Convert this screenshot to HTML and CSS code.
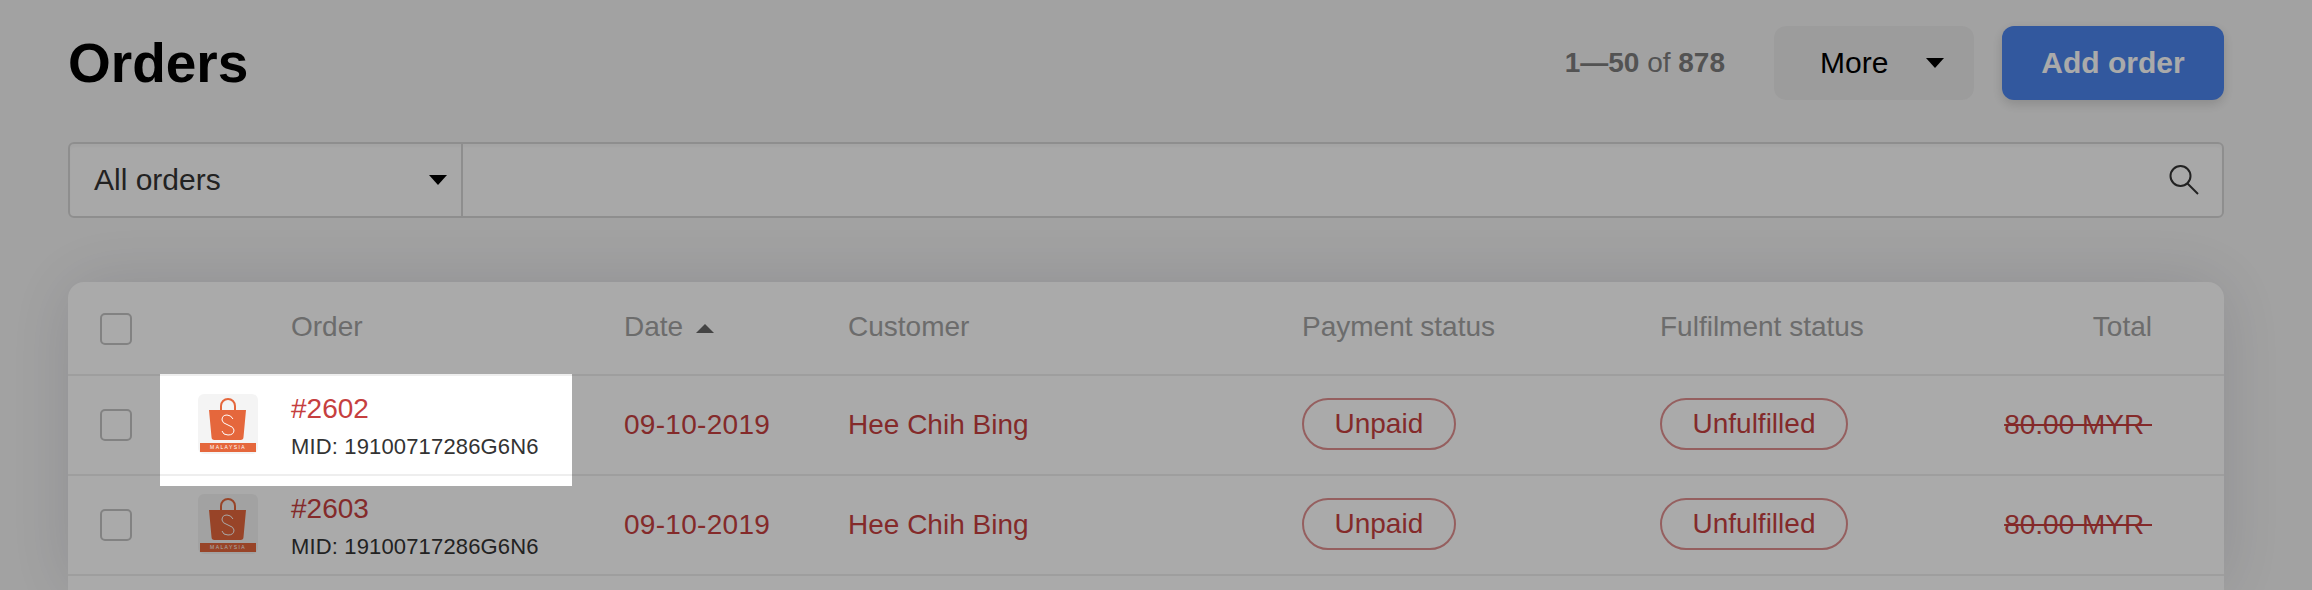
FILE: index.html
```html
<!DOCTYPE html>
<html lang="en">
<head>
<meta charset="UTF-8">
<meta name="viewport" content="width=device-width, initial-scale=1.0">
<title>Orders</title>
<link rel="stylesheet" href="styles.css">
</head>
<body>
<div class="page">
  <div class="topbar">
    <h1 class="title">Orders</h1>
    <div class="range"><b>1—50</b> of <b>878</b></div>
    <button class="btn btn-more">More <span class="caret"></span></button>
    <button class="btn btn-add">Add order</button>
  </div>

  <div class="filter">
    <div class="filter-select">All orders <span class="caret"></span></div>
    <div class="filter-search">
      <svg width="30" height="30" viewBox="0 0 30 30" fill="none" stroke="#333" stroke-width="2">
        <circle cx="11.5" cy="11" r="10"/>
        <path d="M18.5 18.5L29 29"/>
      </svg>
    </div>
  </div>

  <div class="card">
    <div class="row row-head">
      <span class="check"></span>
      <span></span>
      <span>Order</span>
      <span>Date <span class="caret-up"></span></span>
      <span>Customer</span>
      <span>Payment status</span>
      <span>Fulfilment status</span>
      <span class="right">Total</span>
    </div>

    <div class="row">
      <span class="check"></span>
      <svg class="thumb" width="60" height="60" viewBox="0 0 60 60">
        <rect width="60" height="60" rx="6" fill="#f4f4f4"/>
        <path d="M23 17v-5a7 7 0 0 1 14 0v5" fill="none" stroke="#e5673c" stroke-width="2"/>
        <path d="M11 16h37l-2.5 27q0 3-3 3H16.500q-3 0-3-3z" fill="#e5673c"/>
        <path d="M35 25q-2-4-6-4-5 0-5 5 0 3 6 5t6 5q0 5-6 5-5 0-6-4" fill="none" stroke="#fff" stroke-width="1"/>
        <rect x="2" y="49" width="56" height="9" fill="#e5673c"/>
        <text x="30" y="55.4" class="thumb-text">MALAYSIA</text>
      </svg>
      <div class="order-cell">
        <div class="order-no">#2602</div>
        <div class="order-mid">MID: 19100717286G6N6</div>
      </div>
      <span class="red date">09-10-2019</span>
      <span class="red">Hee Chih Bing</span>
      <span class="pill-cell"><span class="pill">Unpaid</span></span>
      <span class="pill-cell"><span class="pill">Unfulfilled</span></span>
      <span class="red right total">80.00 MYR&nbsp;</span>
    </div>

    <div class="row">
      <span class="check"></span>
      <svg class="thumb" width="60" height="60" viewBox="0 0 60 60">
        <rect width="60" height="60" rx="6" fill="#f4f4f4"/>
        <path d="M23 17v-5a7 7 0 0 1 14 0v5" fill="none" stroke="#e5673c" stroke-width="2"/>
        <path d="M11 16h37l-2.5 27q0 3-3 3H16.500q-3 0-3-3z" fill="#e5673c"/>
        <path d="M35 25q-2-4-6-4-5 0-5 5 0 3 6 5t6 5q0 5-6 5-5 0-6-4" fill="none" stroke="#fff" stroke-width="1"/>
        <rect x="2" y="49" width="56" height="9" fill="#e5673c"/>
        <text x="30" y="55.4" class="thumb-text">MALAYSIA</text>
      </svg>
      <div class="order-cell">
        <div class="order-no">#2603</div>
        <div class="order-mid">MID: 19100717286G6N6</div>
      </div>
      <span class="red date">09-10-2019</span>
      <span class="red">Hee Chih Bing</span>
      <span class="pill-cell"><span class="pill">Unpaid</span></span>
      <span class="pill-cell"><span class="pill">Unfulfilled</span></span>
      <span class="red right total">80.00 MYR&nbsp;</span>
    </div>

    <div class="spotlight"></div>
  </div>
</div>
</body>
</html>
```

FILE: styles.css
```css
html, body {
  height: 590px;
  margin: 0;
  overflow: hidden;
}
body {
  font-family: "Liberation Sans", Arial, sans-serif;
  background-color: #f4f4f4;
  color: #333;
}
.page {
  padding: 26px 88px 0 68px;
}
.topbar {
  display: flex;
  align-items: center;
  height: 74px;
  margin-bottom: 42px;
}
.title {
  flex: 1;
  margin: 0;
  font-size: 55px;
  font-weight: bold;
  color: #000;
}
.range {
  margin-right: 49px;
  font-size: 28px;
  color: #7d7d7d;
}
.btn {
  height: 74px;
  border: none;
  border-radius: 12px;
  font-family: inherit;
  font-size: 30px;
}
.btn-more {
  display: flex;
  align-items: center;
  justify-content: space-between;
  width: 200px;
  margin-right: 28px;
  padding: 0 30px 0 46px;
  background-color: #ebebeb;
  color: #000;
}
.btn-add {
  width: 222px;
  background-color: #4b84ee;
  color: #fff;
  font-weight: bold;
  box-shadow: 0 4px 12px rgba(0, 0, 0, 0.15);
}
.caret {
  width: 0;
  height: 0;
  border-left: 9px solid transparent;
  border-right: 9px solid transparent;
  border-top: 10px solid #000;
}
.caret-up {
  display: inline-block;
  width: 0;
  height: 0;
  margin-left: 5px;
  vertical-align: 3px;
  border-left: 9px solid transparent;
  border-right: 9px solid transparent;
  border-bottom: 9px solid #666;
}
.filter {
  display: flex;
  height: 76px;
  margin-bottom: 64px;
  box-sizing: border-box;
  border: 2px solid #d6d6d6;
  border-radius: 6px;
  background-color: #fdfdfd;
  box-shadow: inset 0 3px 3px rgba(0, 0, 0, 0.03);
}
.filter-select {
  display: flex;
  align-items: center;
  justify-content: space-between;
  width: 393px;
  box-sizing: border-box;
  padding: 0 14px 0 24px;
  border-right: 2px solid #d6d6d6;
  font-size: 30px;
}
.filter-search {
  flex: 1;
  display: flex;
  align-items: center;
  justify-content: flex-end;
  padding-right: 23px;
}
.card {
  position: relative;
  height: 308px;
  border-radius: 16px 16px 0 0;
  background-color: #fff;
  box-shadow: 0 0 70px rgba(20, 20, 50, 0.12);
}
.row {
  display: grid;
  grid-template-columns: 98px 93px 333px 224px 454px 358px 245px 1fr;
  align-items: center;
  height: 100px;
  box-sizing: border-box;
  padding: 0 72px 0 32px;
  border-bottom: 2px solid #eee;
  font-size: 28px;
}
.row-head {
  height: 94px;
  padding-bottom: 2px;
  color: #a3a3a3;
}
.row-head .check {
  margin-top: 4px;
}
.check {
  display: block;
  width: 32px;
  height: 32px;
  box-sizing: border-box;
  border: 2px solid #c4c4c4;
  border-radius: 5px;
  background-color: #fff;
}
.right {
  text-align: right;
}
.red {
  color: #c63f3f;
}
.date {
  letter-spacing: 0.3px;
}
.total {
  text-decoration: line-through;
}
.thumb {
  display: block;
  margin-top: -3px;
}
.thumb-text {
  font-size: 5px;
  letter-spacing: 1.4px;
  text-anchor: middle;
  fill: #fff;
}
.order-cell {
  padding-top: 6px;
}
.order-no {
  font-size: 28px;
  line-height: 36px;
  color: #c63f3f;
}
.order-mid {
  margin-top: 2px;
  font-size: 22px;
  line-height: 36px;
  letter-spacing: 0.15px;
  color: #333;
}
.pill-cell {
  display: flex;
}
.pill {
  margin-top: -3px;
  padding: 0 30.5px;
  line-height: 48px;
  border: 2px solid #e08f8f;
  border-radius: 26px;
  color: #c63f3f;
}
/* dims everything on the page except the highlighted order */
.spotlight {
  position: absolute;
  left: 92px;
  top: 92px;
  width: 412px;
  height: 112px;
  box-shadow: 0 0 0 3000px rgba(0, 0, 0, 0.333);
}
```
